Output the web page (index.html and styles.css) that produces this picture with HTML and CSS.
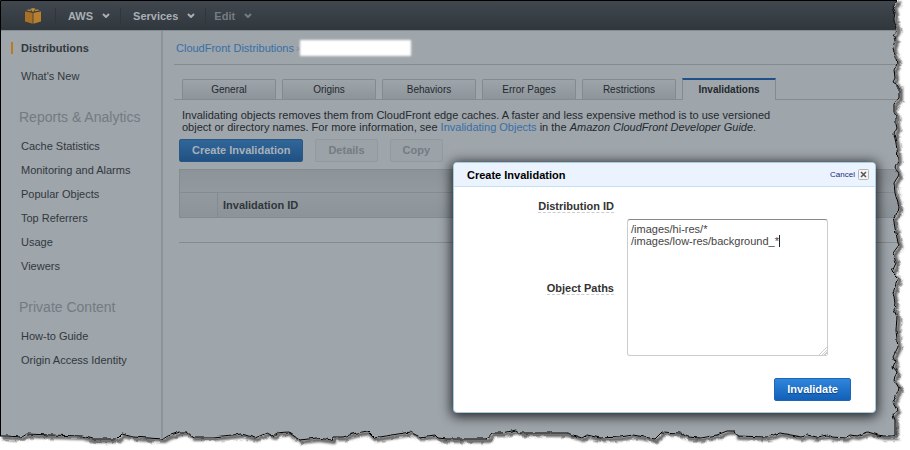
FILE: index.html
```html
<!DOCTYPE html>
<html lang="en">
<head>
<meta charset="utf-8">
<title>CloudFront Invalidations</title>
<link rel="stylesheet" href="styles.css">
</head>
<body>
<div class="console">
  <header class="topbar">
    <a class="logo" href="#" aria-label="Home">
      <svg viewBox="0 0 16 16" width="16" height="16">
        <path fill="#c08a3a" d="M1 2.200l7-2.200 7 2.200-7 1.600z"/>
        <path fill="#a87027" d="M0 3.200l7.600 1.600v11l-7.600-2.200z"/>
        <path fill="#b87f2f" d="M8.400 4.800l7.600-1.600v10.400l-7.600 2.200z"/>
        <path stroke="#343b41" stroke-width=".6" fill="none" d="M0 2.700l8 1.700 8-1.700M4 1.200l2.500.8v2M12 1.200l-2.500.8v2"/>
      </svg>
    </a>
    <nav class="menus">
      <button class="menu" type="button">AWS <svg class="caret" viewBox="0 0 8 5" width="8" height="5"><path d="M1 1l3 3 3-3"/></svg></button>
      <button class="menu" type="button">Services <svg class="caret" viewBox="0 0 8 5" width="8" height="5"><path d="M1 1l3 3 3-3"/></svg></button>
      <button class="menu muted" type="button">Edit <svg class="caret" viewBox="0 0 8 5" width="8" height="5"><path d="M1 1l3 3 3-3"/></svg></button>
    </nav>
  </header>
  <div class="body">
    <aside class="sidebar">
      <ul class="links">
        <li><a class="current" href="#">Distributions</a></li>
        <li class="apart"><a href="#">What's New</a></li>
      </ul>
      <h2>Reports &amp; Analytics</h2>
      <ul class="links">
        <li><a href="#">Cache Statistics</a></li>
        <li><a href="#">Monitoring and Alarms</a></li>
        <li><a href="#">Popular Objects</a></li>
        <li><a href="#">Top Referrers</a></li>
        <li><a href="#">Usage</a></li>
        <li><a href="#">Viewers</a></li>
      </ul>
      <h2>Private Content</h2>
      <ul class="links">
        <li><a href="#">How-to Guide</a></li>
        <li><a href="#">Origin Access Identity</a></li>
      </ul>
    </aside>
    <main class="content">
      <div class="crumbs"><a href="#">CloudFront Distributions</a><span class="sep">›</span><span class="redacted"></span></div>
      <div class="tabs">
        <button class="tab" type="button">General</button>
        <button class="tab" type="button">Origins</button>
        <button class="tab" type="button">Behaviors</button>
        <button class="tab" type="button">Error Pages</button>
        <button class="tab" type="button">Restrictions</button>
        <button class="tab active" type="button">Invalidations</button>
      </div>
      <p class="intro">Invalidating objects removes them from CloudFront edge caches. A faster and less expensive method is to use versioned<br>object or directory names. For more information, see <a href="#">Invalidating Objects</a> in the <em>Amazon CloudFront Developer Guide</em>.</p>
      <div class="actions">
        <button class="btn dim-primary" type="button">Create Invalidation</button>
        <button class="btn off" type="button" disabled>Details</button>
        <button class="btn off" type="button" disabled>Copy</button>
      </div>
      <div class="grid">
        <div class="grid-bar"></div>
        <table>
          <thead><tr><th class="pick"></th><th>Invalidation ID</th></tr></thead>
          <tbody><tr><td colspan="2"></td></tr></tbody>
        </table>
      </div>
    </main>
  </div>

  <form class="dialog" role="dialog" aria-labelledby="dialog-title">
    <div class="dialog-head">
      <h1 id="dialog-title">Create Invalidation</h1>
      <button class="cancel" type="button">Cancel
        <svg viewBox="0 0 11 11" width="11" height="11"><rect x=".5" y=".5" width="10" height="10" rx="1" fill="#f4f4f4" stroke="#b5b5b5"/><path d="M3 3l5 5M8 3l-5 5" stroke="#555" stroke-width="1.500"/></svg>
      </button>
    </div>
    <div class="fields">
      <span class="label"><span class="hint">Distribution ID</span></span>
      <span></span>
      <label class="label" for="paths"><span class="hint">Object Paths</span></label>
      <div class="entry">
        <textarea id="paths" spellcheck="false">/images/hi-res/*
/images/low-res/background_*</textarea>
        <span class="cursor"></span>
      </div>
    </div>
    <div class="dialog-foot"><button class="btn primary" type="button">Invalidate</button></div>
  </form>

  <svg class="torn" viewBox="0 0 910 450" preserveAspectRatio="none" aria-hidden="true">
    <defs>
      <path id="edge" d="M898 0L896 3 893 7 895 12 894 20 897 28 896 32 893 36 895 40 893 48 896 58 897 64 894 70 895 78 893 82 899 86 899 98 894 104 894 112 896 116 896 124 897 128 894 134 896 143 897 150 898 160 895 167 899 175 894 183 895 193 899 207 898 213 893 217 895 228 897 238 899 245 893 253 896 263 892 272 898 278 895 287 893 293 895 302 894 310 897 317 896 330 897 340 898 347 893 357 895 362 893 367 897 372 894 380 899 388 895 398 893 403 897 410 893 415 895 420 895 436 883 436 878 435 868 432 857 436 850 435 845 438 833 437 827 435 817 437 807 435 802 437 780 433 767 437 737 436 735 431 727 431 717 435 700 438 688 437 680 433 662 432 655 439 633 435 620 437 600 438 587 435 582 438 567 433 520 433 516 430 503 433 492 433 487 439 447 439 438 438 435 435 420 437 410 432 380 437 374 438 367 431 353 434 343 437 333 437 332 440 317 438 300 440 288 432 277 433 273 436 267 433 255 438 242 434 213 437 193 437 187 432 180 432 168 436 163 439 133 437 122 434 117 439 93 439 82 436 50 435 27 434 22 437 7 436 0 436"/>
      <clipPath id="outside"><path d="M898 0L896 3 893 7 895 12 894 20 897 28 896 32 893 36 895 40 893 48 896 58 897 64 894 70 895 78 893 82 899 86 899 98 894 104 894 112 896 116 896 124 897 128 894 134 896 143 897 150 898 160 895 167 899 175 894 183 895 193 899 207 898 213 893 217 895 228 897 238 899 245 893 253 896 263 892 272 898 278 895 287 893 293 895 302 894 310 897 317 896 330 897 340 898 347 893 357 895 362 893 367 897 372 894 380 899 388 895 398 893 403 897 410 893 415 895 420 895 436 883 436 878 435 868 432 857 436 850 435 845 438 833 437 827 435 817 437 807 435 802 437 780 433 767 437 737 436 735 431 727 431 717 435 700 438 688 437 680 433 662 432 655 439 633 435 620 437 600 438 587 435 582 438 567 433 520 433 516 430 503 433 492 433 487 439 447 439 438 438 435 435 420 437 410 432 380 437 374 438 367 431 353 434 343 437 333 437 332 440 317 438 300 440 288 432 277 433 273 436 267 433 255 438 242 434 213 437 193 437 187 432 180 432 168 436 163 439 133 437 122 434 117 439 93 439 82 436 50 435 27 434 22 437 7 436 0 436L-20 436V470H930V-20H898z"/></clipPath>
      <filter id="soft" x="-5%" y="-5%" width="110%" height="110%"><feGaussianBlur stdDeviation="1"/></filter>
      <filter id="rough" x="-2%" y="-4%" width="104%" height="108%" color-interpolation-filters="sRGB">
        <feTurbulence type="fractalNoise" baseFrequency="0.2" numOctaves="1" seed="4"/>
        <feDisplacementMap in="SourceGraphic" scale="4" xChannelSelector="R" yChannelSelector="G"/>
      </filter>
    </defs>
    <path class="cut" d="M.5 436V.5H897"/>
    <g filter="url(#rough)">
      <g clip-path="url(#outside)">
        <rect class="paper" x="-20" y="-20" width="950" height="490"/>
        <use href="#edge" class="shade" filter="url(#soft)" transform="translate(2 2)"/>
      </g>
      <use href="#edge" class="cut"/>
    </g>
  </svg>
</div>
</body>
</html>
```
FILE: styles.css
```css
* { box-sizing: border-box; }
body {
  margin: 0;
  background: #fff;
  color: #24292e;
  font: 11px/12px "Liberation Sans", Arial, sans-serif;
}
button, textarea { font: inherit; }
a { color: #386fa5; text-decoration: none; }
ul { list-style: none; margin: 0; padding: 0; }

.console {
  position: relative;
  display: flex;
  flex-direction: column;
  min-height: 100vh;
  padding: 1px 0 0 1px;
  overflow: hidden;
  background: #9ea5ab;
}

.topbar {
  display: flex;
  align-items: center;
  height: 30px;
  background: linear-gradient(#40474e, #30373d);
  border-bottom: 1px solid #858c92;
}
.logo { display: flex; width: 54px; padding-left: 24px; }
.menus { display: flex; }
.menu {
  display: flex;
  align-items: center;
  gap: 9px;
  height: 16px;
  padding: 0 10px 0 12px;
  border: 0;
  border-left: 1px solid #30363b;
  background: none;
  color: #a9afb4;
  font-weight: bold;
}
.menu.muted { padding-left: 8px; color: #757c82; }
.caret { fill: none; stroke: currentColor; stroke-width: 2; }

.body { display: flex; flex: 1; }
.sidebar {
  width: 162px;
  padding: 5px 0 0 10px;
  border-right: 2px solid #8c9399;
}
.links li { height: 24px; display: flex; align-items: center; }
.links .apart { margin-top: 4px; }
.links a { padding-left: 10px; color: #32383d; }
.links .current { padding-left: 8px; border-left: 2px solid #b97a28; font-weight: bold; }
.sidebar h2 {
  margin: 20px 0 8px 8px;
  color: #747b81;
  font-size: 14px;
  font-weight: normal;
  line-height: 18px;
}

.content { flex: 1; min-width: 0; padding-left: 11px; }
.crumbs {
  display: flex;
  align-items: center;
  height: 34px;
  padding-left: 2px;
  border-bottom: 1px solid #848b91;
}
.sep { padding-left: 2px; color: #7d858b; }
.redacted { width: 111px; height: 16px; background: #fff; filter: blur(1px); }

.tabs {
  display: flex;
  align-items: flex-end;
  gap: 6px;
  height: 35px;
  padding-left: 8px;
  border-bottom: 1px solid #848b91;
}
.tab {
  width: 94px;
  height: 20px;
  padding: 0;
  border: 1px solid #838a90;
  border-bottom: 0;
  border-radius: 2px 2px 0 0;
  background: linear-gradient(#9da4aa, #8d949a);
  color: #24292e;
  font-size: 10px;
}
.tab.active {
  height: 22px;
  margin-bottom: -1px;
  border-top: 2px solid #20508a;
  border-radius: 0;
  background: #9ea5ab;
  font-weight: bold;
}

.intro { margin: 9px 0 6px 8px; white-space: nowrap; }
.actions { display: flex; gap: 12px; padding-left: 5px; }
.btn {
  height: 23px;
  padding: 0 12px 2px;
  border: 1px solid;
  border-radius: 2px;
  font-weight: bold;
}
.dim-primary {
  background: linear-gradient(#316699, #215183);
  border-color: #2a5885;
  color: #a8b1b9;
}
.off { background: #9ba2a8; border-color: #929a9f; color: #757c82; }

.grid { margin: 7px 0 0 5px; }
.grid-bar {
  height: 23px;
  border: solid #848b91;
  border-width: 1px 0 0 1px;
  background: linear-gradient(#8c9399, #939a9f);
}
.grid table { width: 100%; border-collapse: separate; border-spacing: 0; }
.grid th {
  height: 26px;
  padding: 0 5px;
  border: solid #848b91;
  border-width: 1px 0;
  background: linear-gradient(#939a9f, #8c9399);
  color: #31363a;
  text-align: left;
}
.grid .pick { width: 39px; border-width: 1px; }
.grid td { height: 25px; padding: 0; border-bottom: 1px solid #848b91; }

.dialog {
  position: absolute;
  top: 162px;
  right: 34px;
  width: 423px;
  background: #fff;
  border: 1px solid #a5cbe0;
  border-radius: 4px;
  box-shadow: 0 2px 12px 2px rgba(0, 0, 0, 0.75);
}
.dialog-head {
  display: flex;
  align-items: center;
  justify-content: space-between;
  height: 24px;
  padding: 0 6px 0 13px;
  background: #eaf3fe;
  border-bottom: 1px solid #c6e0f4;
  border-radius: 3px 3px 0 0;
}
.dialog h1 { margin: 0; color: #000; font-size: 11px; }
.cancel {
  display: flex;
  align-items: center;
  gap: 3px;
  padding: 0;
  border: 0;
  background: none;
  color: #1b2a80;
  font-size: 8px;
}
.fields {
  display: grid;
  grid-template-columns: 160px 201px;
  column-gap: 13px;
  row-gap: 7px;
  align-items: center;
  padding-top: 13px;
}
.label { text-align: right; color: #333; font-weight: bold; }
.hint { border-bottom: 1px dashed #ccc; }
.entry { position: relative; }
textarea {
  display: block;
  width: 100%;
  height: 137px;
  padding: 3px;
  border: 1px solid #ccc;
  border-top-color: #888;
  border-radius: 3px;
  outline: 0;
  background: #fff;
  color: #444;
}
textarea::-webkit-resizer {
  background:
    linear-gradient(135deg, #fff 70%, transparent 70%),
    repeating-linear-gradient(135deg, #fff 0 1px, #ccc 1px 2px);
}
.cursor {
  position: absolute;
  top: 16px;
  left: 152px;
  width: 1px;
  height: 12px;
  background: #222;
}
.dialog-foot { display: flex; justify-content: flex-end; padding: 22px 24px 11px; }
.primary {
  background: linear-gradient(#2f86dc, #1260b8);
  border-color: #1d66b4;
  color: #fff;
  text-shadow: 0 1px 1px #0a4080;
}

.torn { position: absolute; inset: 0; width: 100%; height: 100%; pointer-events: none; }
.paper { fill: #fff; }
.shade { fill: none; stroke: #666; stroke-width: 4; }
.cut { fill: none; stroke: #000; stroke-width: 1; }
```
